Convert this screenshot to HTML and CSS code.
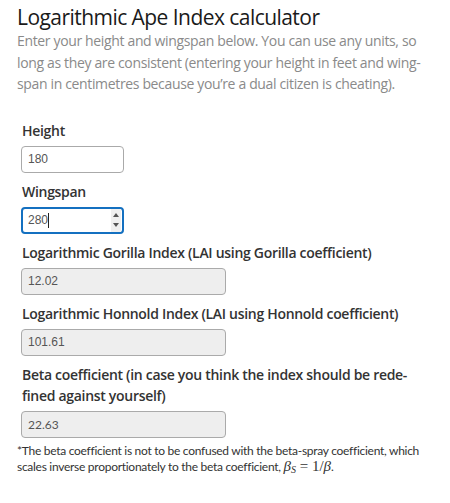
FILE: index.html
```html
<!DOCTYPE html>
<html lang="en">
<head>
<meta charset="utf-8">
<title>Logarithmic Ape Index calculator</title>
<link rel="stylesheet" href="styles.css">
</head>
<body>
<main class="page">
  <h1 class="title">Logarithmic Ape Index calculator</h1>
  <p class="lead">Enter your height and wingspan below. You can use any units, so long as they are consistent (entering your height in feet and wing-span in centimetres because you’re a dual citizen is cheating).</p>

  <form class="calc">
    <div class="group">
      <label class="label" for="h">Height</label>
      <input class="control short" id="h" type="text" value="180">
    </div>
    <div class="group">
      <label class="label" for="w">Wingspan</label>
      <div class="spinwrap">
        <input class="control short focus" id="w" type="text" value="280">
        <span class="caret"></span>
        <span class="spin"><span class="up"></span><span class="down"></span></span>
      </div>
    </div>
    <div class="group">
      <label class="label" for="g">Logarithmic Gorilla Index (LAI using Gorilla coefficient)</label>
      <input class="control wide" id="g" type="text" value="12.02" disabled>
    </div>
    <div class="group">
      <label class="label" for="ho">Logarithmic Honnold Index (LAI using Honnold coefficient)</label>
      <input class="control wide" id="ho" type="text" value="101.61" disabled>
    </div>
    <div class="group">
      <label class="label" for="b">Beta coefficient (in case you think the index should be rede-fined against yourself)</label>
      <input class="control wide lato" id="b" type="text" value="22.63" disabled>
    </div>
  </form>
  <p class="note">*The beta coefficient is not to be confused with the beta-spray coefficient, which scales inverse proportionately to the beta coefficient, <span class="math"><i>β</i><sub><i>S</i></sub> = 1/<i>β</i></span>.</p>
</main>
</body>
</html>
```
FILE: styles.css
```css
html, body {
  margin: 0;
  padding: 0;
  background: #ffffff;
}
.page {
  padding: 5px 10px 0 17px;
  font-family: "Open Sans", "Noto Sans", sans-serif;
}
.title {
  margin: 0;
  font-size: 21px;
  font-weight: 500;
  letter-spacing: -0.55px;
  line-height: 25px;
  color: #1a1a1a;
}
.lead {
  margin: 0;
  font-size: 14px;
  letter-spacing: -0.35px;
  line-height: 21.5px;
  color: #8a8a8a;
}
.calc {
  margin-top: 25px;
  padding-left: 4px;
}
.group {
  display: flex;
  flex-direction: column;
  align-items: flex-start;
  margin-bottom: 8px;
}
.label {
  font-size: 14px;
  font-weight: 600;
  letter-spacing: -0.3px;
  color: #333;
  line-height: 21px;
  margin-bottom: 5px;
  padding-left: 1px;
}
.control {
  box-sizing: border-box;
  height: 27px;
  border: 1px solid #aaa;
  border-radius: 4px;
  padding: 0 6px;
  font-family: "Liberation Sans", Arial, sans-serif;
  font-size: 12px;
  color: #555;
  background: #fff;
  outline: none;
  margin: 0;
}
.short { width: 103px; }
.wide { width: 205px; }
.control:disabled {
  background: #eee;
  color: #555;
  border-color: #aaa;
}
.lato {
  font-family: Lato, sans-serif;
  font-size: 12px;
}
.focus {
  border: 2px solid #1470c0;
  padding: 0 5px;
}
.spinwrap {
  position: relative;
  height: 27px;
}
.caret {
  position: absolute;
  left: 27px;
  top: 6px;
  width: 1px;
  height: 15px;
  background: #222;
}
.spin {
  position: absolute;
  right: 3px;
  top: 2px;
  bottom: 2px;
  width: 10px;
  background: #f0f0f0;
  display: flex;
  flex-direction: column;
  align-items: center;
  justify-content: center;
  gap: 6px;
}
.up, .down {
  width: 0;
  height: 0;
  border-left: 3px solid transparent;
  border-right: 3px solid transparent;
}
.up { border-bottom: 4px solid #555; }
.down { border-top: 4px solid #555; }
.note {
  margin: -3px 0 0 0;
  font-family: Lato, sans-serif;
  font-size: 12px;
  letter-spacing: -0.28px;
  line-height: 16px;
  color: #333;
}
.math {
  font-family: "Liberation Serif", serif;
  font-size: 15px;
  letter-spacing: 0;
  line-height: 0;
}
.math sub {
  font-size: 10px;
  vertical-align: -2px;
  line-height: 0;
}
```
